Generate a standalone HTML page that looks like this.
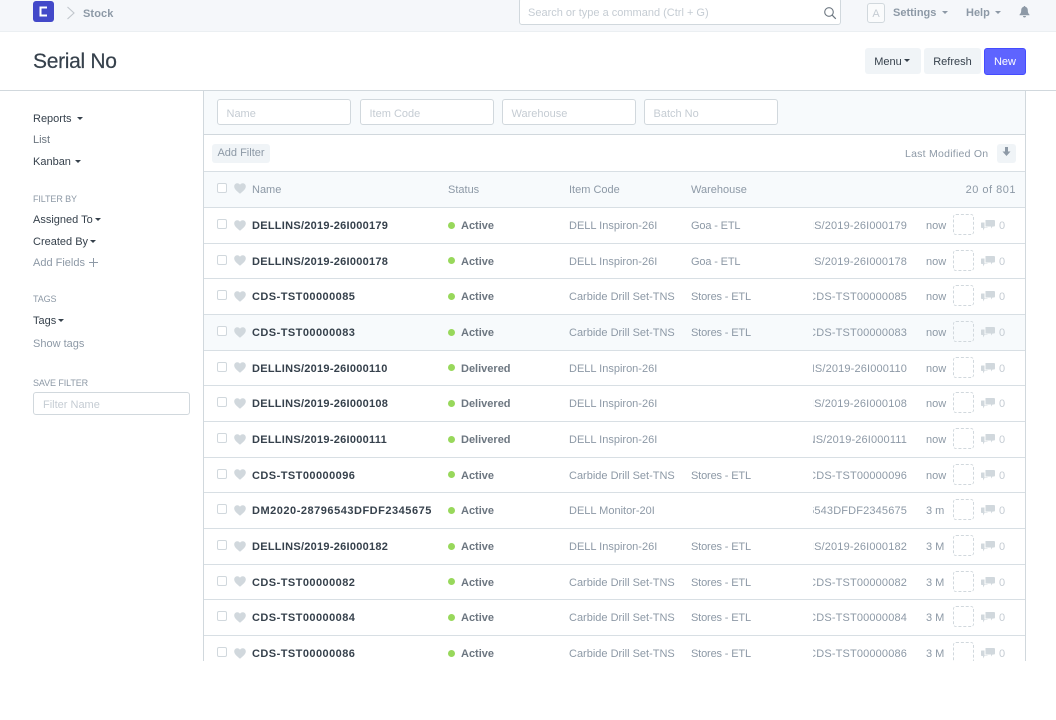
<!DOCTYPE html>
<html lang="en">
<head>
<meta charset="utf-8">
<title>Serial No</title>
<style>
html,body{margin:0;padding:0;background:#fff;width:1056px;height:720px;overflow:hidden}
body{font-family:"Liberation Sans",sans-serif;font-size:11px;color:#8d99a6;position:relative}
.a{position:absolute;white-space:nowrap}
.inp{position:absolute;box-sizing:border-box;height:26px;background:#fff;border:1px solid #d1d8dd;border-radius:3px;font-size:11px;color:#c5ccd3;line-height:28px;padding-left:8.500px;white-space:nowrap}
.caret{position:absolute;width:0;height:0;border-left:3.5px solid transparent;border-right:3.5px solid transparent;border-top:3.5px solid #36414c}
.side{position:absolute;left:33px;white-space:nowrap;font-size:11px;line-height:16px;color:#36414c}
.lbl{position:absolute;left:33px;font-size:9px;letter-spacing:-.1px;line-height:13px;color:#8d99a6}
.btn{position:absolute;top:48px;height:26px;background:#f0f4f7;border-radius:3px;font-size:11px;line-height:28px;color:#36414c;text-align:center}
#clip{position:absolute;left:203px;top:91px;width:823px;height:570px;overflow:hidden;box-sizing:border-box;border-left:1px solid #d1d8dd;border-right:1px solid #d1d8dd}
.r{position:absolute;left:0;width:821px;height:36px;border-top:1px solid #d8dfe4;box-sizing:border-box;line-height:37px;font-size:11px;background:#fff}
.r.h{background:#f7fafc}
.r>*{position:absolute}
.cb{left:13px;top:11px;width:8px;height:8px;border:1px solid #d1d8dd;border-radius:2px;background:#fff}
.he{left:30px;top:11.500px;width:12px;height:11px}
.n{left:48px;font-weight:bold;color:#36414c;letter-spacing:.45px;white-space:nowrap}
.n.l{letter-spacing:.27px}
.d{left:244px;top:13.500px;width:7px;height:7px;border-radius:50%;background:#98d85b}
.s{left:257px;font-weight:bold;color:#6c7680}
.i{left:365px;white-space:nowrap}
.w{left:487px;white-space:nowrap;letter-spacing:-.15px}
.t{left:609px;width:94px;text-align:right;overflow:hidden;white-space:nowrap;direction:rtl;letter-spacing:.15px}
.m{left:722px;white-space:nowrap}
.b{left:749px;top:6px;width:19px;height:19px;border:1px dashed #d1d8dd;border-radius:3px}
.c{left:777px;top:11px;width:14px;height:12px}
.z{left:795px;color:#c5ccd3}
.hd{position:absolute;top:91px;line-height:16px;font-size:11px}
</style>
</head>
<body>
<svg width="0" height="0" style="position:absolute">
<symbol id="heart" viewBox="0 0 12 11"><path fill="#d1d8dd" d="M6 10.800C2.600 8 .2 6 .2 3.400.2 1.500 1.600.2 3.300.2 4.400.2 5.400.8 6 1.800 6.600.8 7.600.2 8.700.2c1.700 0 3.100 1.300 3.100 3.200C11.800 6 9.400 8 6 10.800z"/></symbol>
<symbol id="cm" viewBox="0 0 14 12"><path fill="#d1d8dd" d="M4.500 1h8.500a1 1 0 0 1 1 1v4.500a1 1 0 0 1-1 1h-1.500L10 9.500V7.500H4.500z"/><path fill="#d1d8dd" d="M.7 3.500H3.500V8.500H6.500V9H3.500L2 11.500V9H.7A.7.7 0 0 1 0 8.300V4.200A.7.7 0 0 1 .7 3.500z"/></symbol>
</svg>

<!-- navbar -->
<div class="a" style="left:0;top:0;width:1056px;height:31px;background:#f5f7fa;border-bottom:1px solid #ebeff2"></div>
<div class="a" style="left:33px;top:1px;width:21px;height:21px;background:#4349c9;border-radius:3px"></div>
<svg class="a" style="left:33px;top:1px" width="21" height="21"><path d="M14 6.500H7.500V14.500H14" fill="none" stroke="#fff" stroke-width="2"/></svg>
<svg class="a" style="left:66px;top:6px" width="10" height="14"><path d="M1.500 1L8 7 1.500 13" fill="none" stroke="#c0c6cc" stroke-width="1.100"/></svg>
<div class="a" style="left:83px;top:6px;font-size:11px;font-weight:bold;letter-spacing:.1px;line-height:16px;color:#8d99a6">Stock</div>
<div class="a" style="left:519px;top:-2px;width:322px;height:27px;box-sizing:border-box;background:#fff;border:1px solid #d1d8dd;border-radius:3px;font-size:11px;color:#c5ccd3;line-height:29px;padding-left:8px">Search or type a command (Ctrl + G)</div>
<svg class="a" style="left:823px;top:6px" width="14" height="14"><circle cx="6" cy="6" r="4.300" fill="none" stroke="#6c7680" stroke-width="1.100"/><path d="M9.200 9.200L12.800 12.800" stroke="#6c7680" stroke-width="1.200"/></svg>
<div class="a" style="left:867px;top:3px;width:18px;height:20px;box-sizing:border-box;border:1px solid #d1d8dd;border-radius:3px;background:#fafbfc;color:#c5ccd3;font-size:11px;line-height:20px;text-align:center">A</div>
<div class="a" style="left:893px;top:5px;font-size:11px;font-weight:bold;line-height:16px;color:#8d99a6">Settings</div>
<div class="caret" style="left:942px;top:11px;border-top-color:#8d99a6"></div>
<div class="a" style="left:966px;top:5px;font-size:11px;font-weight:bold;line-height:16px;color:#8d99a6">Help</div>
<div class="caret" style="left:995px;top:11px;border-top-color:#8d99a6"></div>
<svg class="a" style="left:1019px;top:6px" width="11" height="12"><path fill="#8d99a6" d="M5.500 0c.5 0 .8.300.8.800C8 1.200 8.800 2.600 8.800 4.300c0 2.500.7 3.400 1.700 4.400v.6H.5v-.6c1-1 1.700-1.900 1.700-4.400 0-1.700.8-3.100 2.500-3.500 0-.5.300-.8.800-.8zM4 10h3c0 .9-.7 1.500-1.500 1.500S4 10.900 4 10z"/></svg>

<!-- page head -->
<div class="a" style="left:33px;top:48px;font-size:21px;line-height:28px;letter-spacing:-.3px;color:#36414c;-webkit-text-stroke:.2px #36414c">Serial No</div>
<div class="btn" style="left:865px;width:56px;padding-right:10px;box-sizing:border-box;padding-left:0">Menu</div>
<div class="caret" style="left:904px;top:59px"></div>
<div class="btn" style="left:924px;width:57px">Refresh</div>
<div class="btn" style="left:984px;width:42px;height:27px;top:47.500px;background:#5e64ff;border:1px solid #444bff;box-sizing:border-box;color:#fff;line-height:26px">New</div>
<div class="a" style="left:0;top:90px;width:1056px;height:1px;background:#d1d8dd"></div>

<!-- sidebar -->
<div class="side" style="top:111px">Reports</div><div class="caret" style="left:77px;top:117px"></div>
<div class="side" style="top:132px;color:#6c7680">List</div>
<div class="side" style="top:154px">Kanban</div><div class="caret" style="left:75px;top:160px"></div>
<div class="lbl" style="top:193px">FILTER BY</div>
<div class="side" style="top:212px">Assigned To</div><div class="caret" style="left:95px;top:218px"></div>
<div class="side" style="top:234px">Created By</div><div class="caret" style="left:90px;top:240px"></div>
<div class="side" style="top:255px;color:#8d99a6">Add Fields</div>
<svg class="a" style="left:89px;top:258px" width="9" height="9"><path d="M4.500 0V9M0 4.500H9" stroke="#8d99a6" stroke-width="1"/></svg>
<div class="lbl" style="top:293px">TAGS</div>
<div class="side" style="top:313px">Tags</div><div class="caret" style="left:58px;top:319px"></div>
<div class="side" style="top:336px;color:#8d99a6">Show tags</div>
<div class="lbl" style="top:377px">SAVE FILTER</div>
<div class="inp" style="left:33px;top:392px;width:157px;height:23px;line-height:24px;padding-left:9px">Filter Name</div>

<!-- list -->
<div id="clip">
  <div class="a" style="left:0;top:0;width:821px;height:43px;background:#f7fafc;border-bottom:1px solid #d1d8dd"></div>
  <div class="inp" style="left:13px;top:8px;width:134px">Name</div>
  <div class="inp" style="left:156px;top:8px;width:134px">Item Code</div>
  <div class="inp" style="left:298px;top:8px;width:134px">Warehouse</div>
  <div class="inp" style="left:440px;top:8px;width:134px">Batch No</div>

  <div class="a" style="left:8px;top:53px;width:58px;height:19px;background:#f0f4f7;border-radius:3px;font-size:11px;line-height:19px;text-align:center;color:#8d99a6">Add Filter</div>
  <div class="a" style="left:701px;top:55px;font-size:10.500px;letter-spacing:.25px;line-height:16px;color:#8d99a6">Last Modified On</div>
  <div class="a" style="left:793px;top:53px;width:19px;height:19px;background:#f0f4f7;border-radius:3px"></div>
  <svg class="a" style="left:798px;top:56px" width="9" height="11"><path fill="#8d99a6" d="M3 0H6V4.500H8.500L4.500 9 .5 4.500H3z"/></svg>

  <div class="a" style="left:0;top:80px;width:821px;height:36px;background:#f7fafc;border-top:1px solid #d8dfe4;box-sizing:border-box"></div>
  <div class="a" style="left:13px;top:92px;width:8px;height:8px;border:1px solid #d1d8dd;border-radius:2px;background:#fff"></div>
  <svg class="a" style="left:30px;top:92px" width="12" height="11"><use href="#heart"/></svg>
  <div class="hd" style="left:48px">Name</div>
  <div class="hd" style="left:244px">Status</div>
  <div class="hd" style="left:365px">Item Code</div>
  <div class="hd" style="left:487px">Warehouse</div>
  <div class="hd" style="left:748px;width:64px;text-align:right;letter-spacing:.5px">20 of 801</div>

  <div class="r" style="top:116px"><i class="cb"></i><svg class="he"><use href="#heart"/></svg><span class="n l">DELLINS/2019-26I000179</span><i class="d"></i><span class="s">Active</span><span class="i">DELL Inspiron-26I</span><span class="w">Goa - ETL</span><span class="t">DELLINS/2019-26I000179</span><span class="m">now</span><i class="b"></i><svg class="c"><use href="#cm"/></svg><span class="z">0</span></div>
  <div class="r" style="top:151.600px"><i class="cb"></i><svg class="he"><use href="#heart"/></svg><span class="n l">DELLINS/2019-26I000178</span><i class="d"></i><span class="s">Active</span><span class="i">DELL Inspiron-26I</span><span class="w">Goa - ETL</span><span class="t">DELLINS/2019-26I000178</span><span class="m">now</span><i class="b"></i><svg class="c"><use href="#cm"/></svg><span class="z">0</span></div>
  <div class="r" style="top:187.300px"><i class="cb"></i><svg class="he"><use href="#heart"/></svg><span class="n">CDS-TST00000085</span><i class="d"></i><span class="s">Active</span><span class="i">Carbide Drill Set-TNS</span><span class="w">Stores - ETL</span><span class="t">CDS-TST00000085</span><span class="m">now</span><i class="b"></i><svg class="c"><use href="#cm"/></svg><span class="z">0</span></div>
  <div class="r h" style="top:223px"><i class="cb"></i><svg class="he"><use href="#heart"/></svg><span class="n">CDS-TST00000083</span><i class="d"></i><span class="s">Active</span><span class="i">Carbide Drill Set-TNS</span><span class="w">Stores - ETL</span><span class="t">CDS-TST00000083</span><span class="m">now</span><i class="b"></i><svg class="c"><use href="#cm"/></svg><span class="z">0</span></div>
  <div class="r" style="top:258.600px"><i class="cb"></i><svg class="he"><use href="#heart"/></svg><span class="n l">DELLINS/2019-26I000110</span><i class="d"></i><span class="s">Delivered</span><span class="i">DELL Inspiron-26I</span><span class="t">DELLINS/2019-26I000110</span><span class="m">now</span><i class="b"></i><svg class="c"><use href="#cm"/></svg><span class="z">0</span></div>
  <div class="r" style="top:294.300px"><i class="cb"></i><svg class="he"><use href="#heart"/></svg><span class="n l">DELLINS/2019-26I000108</span><i class="d"></i><span class="s">Delivered</span><span class="i">DELL Inspiron-26I</span><span class="t">DELLINS/2019-26I000108</span><span class="m">now</span><i class="b"></i><svg class="c"><use href="#cm"/></svg><span class="z">0</span></div>
  <div class="r" style="top:330px"><i class="cb"></i><svg class="he"><use href="#heart"/></svg><span class="n l">DELLINS/2019-26I000111</span><i class="d"></i><span class="s">Delivered</span><span class="i">DELL Inspiron-26I</span><span class="t">DELLINS/2019-26I000111</span><span class="m">now</span><i class="b"></i><svg class="c"><use href="#cm"/></svg><span class="z">0</span></div>
  <div class="r" style="top:365.600px"><i class="cb"></i><svg class="he"><use href="#heart"/></svg><span class="n">CDS-TST00000096</span><i class="d"></i><span class="s">Active</span><span class="i">Carbide Drill Set-TNS</span><span class="w">Stores - ETL</span><span class="t">CDS-TST00000096</span><span class="m">now</span><i class="b"></i><svg class="c"><use href="#cm"/></svg><span class="z">0</span></div>
  <div class="r" style="top:401.300px"><i class="cb"></i><svg class="he"><use href="#heart"/></svg><span class="n" style="letter-spacing:.52px">DM2020-28796543DFDF2345675</span><i class="d"></i><span class="s">Active</span><span class="i">DELL Monitor-20I</span><span class="t">DM2020-28796543DFDF2345675</span><span class="m">3 m</span><i class="b"></i><svg class="c"><use href="#cm"/></svg><span class="z">0</span></div>
  <div class="r" style="top:437px"><i class="cb"></i><svg class="he"><use href="#heart"/></svg><span class="n l">DELLINS/2019-26I000182</span><i class="d"></i><span class="s">Active</span><span class="i">DELL Inspiron-26I</span><span class="w">Stores - ETL</span><span class="t">DELLINS/2019-26I000182</span><span class="m">3 M</span><i class="b"></i><svg class="c"><use href="#cm"/></svg><span class="z">0</span></div>
  <div class="r" style="top:472.600px"><i class="cb"></i><svg class="he"><use href="#heart"/></svg><span class="n">CDS-TST00000082</span><i class="d"></i><span class="s">Active</span><span class="i">Carbide Drill Set-TNS</span><span class="w">Stores - ETL</span><span class="t">CDS-TST00000082</span><span class="m">3 M</span><i class="b"></i><svg class="c"><use href="#cm"/></svg><span class="z">0</span></div>
  <div class="r" style="top:508.300px"><i class="cb"></i><svg class="he"><use href="#heart"/></svg><span class="n">CDS-TST00000084</span><i class="d"></i><span class="s">Active</span><span class="i">Carbide Drill Set-TNS</span><span class="w">Stores - ETL</span><span class="t">CDS-TST00000084</span><span class="m">3 M</span><i class="b"></i><svg class="c"><use href="#cm"/></svg><span class="z">0</span></div>
  <div class="r" style="top:544px"><i class="cb"></i><svg class="he"><use href="#heart"/></svg><span class="n">CDS-TST00000086</span><i class="d"></i><span class="s">Active</span><span class="i">Carbide Drill Set-TNS</span><span class="w">Stores - ETL</span><span class="t">CDS-TST00000086</span><span class="m">3 M</span><i class="b"></i><svg class="c"><use href="#cm"/></svg><span class="z">0</span></div>
</div>
</body>
</html>
